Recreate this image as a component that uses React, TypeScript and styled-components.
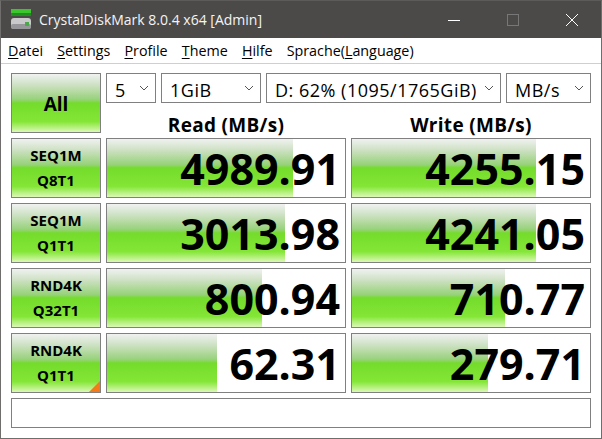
import React from 'react';
import styled, { createGlobalStyle } from 'styled-components';

const Global = createGlobalStyle`
  html, body { margin: 0; padding: 0; background: #fff; }
  #root { width: 602px; height: 439px; overflow: hidden; }
`;

const Win = styled.div`
  box-sizing: border-box;
  width: 602px;
  height: 439px;
  display: flex;
  flex-direction: column;
  border: 1px solid #6f6e6c;
  border-top-color: #5c5b59;
  font-family: "Open Sans", "Noto Sans", sans-serif;
  color: #000;
  background: #fff;
`;

const TitleBar = styled.div`
  height: 37px;
  flex: none;
  background: #4b4a48;
  display: flex;
  align-items: center;
  color: #f4f4f4;
  font-size: 14px;
  padding-left: 9px;
`;

const TitleText = styled.span`
  margin-left: 8px;
  flex: 1;
  white-space: nowrap;
`;

const WinBtn = styled.div`
  width: 59px;
  height: 37px;
  display: flex;
  align-items: center;
  justify-content: center;
`;

const MenuBar = styled.div`
  height: 25px;
  flex: none;
  display: flex;
  align-items: center;
  gap: 14.2px;
  padding-left: 7px;
  font-size: 14.3px;
  border-bottom: 1px solid #cfcfcf;
  white-space: nowrap;
  u { text-underline-offset: 2px; }
`;

const MenuItem = styled.span``;

const Main = styled.div`
  flex: 1;
  display: grid;
  grid-template-columns: 90px 240px 240px;
  grid-template-rows: repeat(5, 60px) 30px;
  gap: 5px;
  padding: 9px 0 0 10px;
  align-content: start;
`;

const green = `linear-gradient(180deg, #f0f2f0 0%, #cfe2c6 18%, #97d27a 44%, #74dc2c 50%, #84e636 82%, #dcf8b8 100%)`;

const ActionBtn = styled.div`
  box-sizing: border-box;
  border: 1px solid #808080;
  background: ${green};
  position: relative;
  display: flex;
  flex-direction: column;
  align-items: center;
  justify-content: center;
  font-weight: 700;
  overflow: hidden;
`;

const AllLabel = styled.span`
  font-size: 19px;
  margin-top: 2px;
`;

const TestLabel = styled.span`
  font-size: 15px;
  line-height: 25px;
`;

const Corner = styled.div`
  position: absolute;
  right: 0;
  bottom: 0;
  width: 0;
  height: 0;
  border-style: solid;
  border-width: 0 0 11px 11px;
  border-color: transparent transparent #f47a1a transparent;
`;

const TopColumn = styled.div`
  grid-column: 2 / 4;
  display: flex;
  flex-direction: column;
`;

const Combos = styled.div`
  display: flex;
  gap: 5px;
  height: 30px;
`;

const Combo = styled.div<{ $w: number }>`
  box-sizing: border-box;
  width: ${p => p.$w}px;
  border: 1px solid #808080;
  display: flex;
  align-items: center;
  padding: 0 6px 0 8px;
  font-size: 18px;
  letter-spacing: 0.5px;
  white-space: nowrap;
  background: #fff;
`;

const ComboText = styled.span`
  overflow: hidden;
  flex: 1;
  margin-right: 8px;
  padding-top: 3px;
`;

const Heads = styled.div`
  display: grid;
  grid-template-columns: 240px 240px;
  column-gap: 5px;
`;

const Head = styled.div`
  text-align: center;
  font-size: 19px;
  font-weight: 700;
  letter-spacing: 0.3px;
  line-height: 28px;
  padding-top: 8px;
  height: 30px;
  box-sizing: border-box;
  white-space: nowrap;
`;

const Score = styled.div`
  box-sizing: border-box;
  position: relative;
  border: 1px solid #808080;
  display: flex;
  align-items: center;
  justify-content: flex-end;
  padding: 1px 5px 0 0;
  overflow: hidden;
  background: #fff;
`;

const Fill = styled.div`
  position: absolute;
  left: 0;
  top: 0;
  bottom: 0;
  background: ${green};
`;

const Value = styled.span`
  position: relative;
  font-size: 43px;
  font-weight: 700;
  line-height: 1;
`;

const Status = styled.div`
  grid-column: 1 / 4;
  box-sizing: border-box;
  border: 1px solid #808080;
`;

const Chevron = () => (
  <svg width="10" height="6" viewBox="0 0 10 6" fill="none" stroke="#555" strokeWidth="1">
    <path d="M1 1l4 4 4-4" />
  </svg>
);

const Logo = () => (
  <svg width="21" height="21" viewBox="0 0 21 21">
    <rect x="1" y="0" width="20" height="4" fill="#3cc52c" />
    <rect x="1" y="4" width="20" height="3" fill="#1f8f1f" />
    <rect x="1" y="9" width="20" height="11" rx="3" fill="#c9c9cc" />
    <rect x="1" y="15" width="20" height="5" rx="2" fill="#97979b" />
    <rect x="15" y="13" width="4" height="4" fill="#4aa84a" />
  </svg>
);

const rows = [
  { a: 'SEQ1M', b: 'Q8T1', r: '4989.91', rw: 186, w: '4255.15', ww: 184 },
  { a: 'SEQ1M', b: 'Q1T1', r: '3013.98', rw: 178, w: '4241.05', ww: 184 },
  { a: 'RND4K', b: 'Q32T1', r: '800.94', rw: 155, w: '710.77', ww: 153 },
  { a: 'RND4K', b: 'Q1T1', r: '62.31', rw: 110, w: '279.71', ww: 136 },
];

export default function App() {
  return (
    <Win>
      <Global />
      <TitleBar>
        <Logo />
        <TitleText>CrystalDiskMark 8.0.4 x64 [Admin]</TitleText>
        <WinBtn>
          <svg width="12" height="12" viewBox="0 0 12 12"><path d="M0 6.5h12" stroke="#fff" /></svg>
        </WinBtn>
        <WinBtn>
          <svg width="12" height="12" viewBox="0 0 12 12"><rect x=".5" y=".5" width="11" height="11" fill="none" stroke="#777" /></svg>
        </WinBtn>
        <WinBtn>
          <svg width="12" height="12" viewBox="0 0 12 12"><path d="M0 0l12 12M12 0L0 12" stroke="#fff" /></svg>
        </WinBtn>
      </TitleBar>
      <MenuBar>
        <MenuItem><u>D</u>atei</MenuItem>
        <MenuItem><u>S</u>ettings</MenuItem>
        <MenuItem><u>P</u>rofile</MenuItem>
        <MenuItem><u>T</u>heme</MenuItem>
        <MenuItem><u>H</u>ilfe</MenuItem>
        <MenuItem>Sprache(<u>L</u>anguage)</MenuItem>
      </MenuBar>
      <Main>
        <ActionBtn><AllLabel>All</AllLabel></ActionBtn>
        <TopColumn>
          <Combos>
            <Combo $w={50}><ComboText>5</ComboText><Chevron /></Combo>
            <Combo $w={100}><ComboText>1GiB</ComboText><Chevron /></Combo>
            <Combo $w={235}><ComboText>D: 62% (1095/1765GiB)</ComboText><Chevron /></Combo>
            <Combo $w={85}><ComboText>MB/s</ComboText><Chevron /></Combo>
          </Combos>
          <Heads>
            <Head>Read (MB/s)</Head>
            <Head>Write (MB/s)</Head>
          </Heads>
        </TopColumn>
        {rows.map((row, i) => (
          <React.Fragment key={i}>
            <ActionBtn>
              <TestLabel>{row.a}</TestLabel>
              <TestLabel>{row.b}</TestLabel>
              {i === 3 && <Corner />}
            </ActionBtn>
            <Score>
              <Fill style={{ width: row.rw }} />
              <Value>{row.r}</Value>
            </Score>
            <Score>
              <Fill style={{ width: row.ww }} />
              <Value>{row.w}</Value>
            </Score>
          </React.Fragment>
        ))}
        <Status />
      </Main>
    </Win>
  );
}
